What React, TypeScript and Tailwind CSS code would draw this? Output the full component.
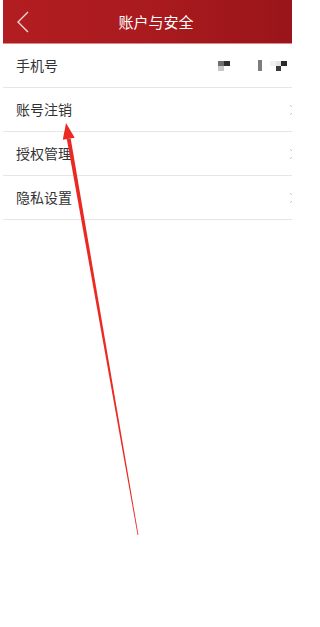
import React from "react";

const rows = ["账号注销", "授权管理", "隐私设置"];

function Chevron() {
  return (
    <svg width="8" height="12" viewBox="0 0 8 12" className="shrink-0">
      <path d="M1 1 L6 6 L1 11" fill="none" stroke="#c4c4c4" strokeWidth="1" />
    </svg>
  );
}

export default function App() {
  return (
    <div
      className="relative w-[292px] h-[627px] bg-white overflow-hidden pl-[3px]"
      style={{ fontFamily: '"Noto Sans CJK SC", "Noto Sans", sans-serif' }}
    >
      <div className="h-[44px] bg-gradient-to-r from-[#b21d21] via-[#a91a1e] to-[#981519] border-b border-[#d98a8c] flex items-center relative w-[300px]">
        <svg width="14" height="22" viewBox="0 0 14 22" className="ml-[13px]">
          <path d="M12 1 L2 11 L12 21" fill="none" stroke="#f4d6d6" strokeWidth="1.4" />
        </svg>
        <div className="absolute left-0 right-[8px] text-center text-white text-[15px] leading-[20px] pl-[14px]">
          账户与安全
        </div>
      </div>
      <div className="h-[44px] flex items-center border-b border-[#e6e6e6] pl-[13px] text-[14px] text-[#333]">
        <span className="flex-1">手机号</span>
        <div className="flex items-center mr-[5px]">
          <div className="flex flex-col mr-[28px]">
            <div className="flex">
              <div className="w-[6px] h-[5px] bg-[#6e6e6e]" />
              <div className="w-[6px] h-[5px] bg-[#2e2e2e]" />
            </div>
            <div className="w-[6px] h-[5px] bg-[#c9c9c9]" />
          </div>
          <div className="w-[4px] h-[11px] bg-[#7d7d7d] mr-[8px]" />
          <div className="flex flex-col">
            <div className="flex">
              <div className="w-[6px] h-[5px] bg-[#f0f0f0]" />
              <div className="w-[5px] h-[5px] bg-[#e3e3e3]" />
              <div className="w-[6px] h-[5px] bg-[#2b2b2b]" />
            </div>
            <div className="flex">
              <div className="w-[6px] h-[5px] bg-white" />
              <div className="w-[5px] h-[5px] bg-[#3a3a3a]" />
              <div className="w-[6px] h-[5px] bg-white" />
            </div>
          </div>
        </div>
      </div>
      {rows.map((r) => (
        <div
          key={r}
          className="h-[44px] flex items-center border-b border-[#e6e6e6] pl-[13px] text-[14px] text-[#333] w-[294px]"
        >
          <span className="flex-1">{r}</span>
          <Chevron />
        </div>
      ))}
      <svg
        className="absolute left-0 top-0 pointer-events-none"
        width="292"
        height="627"
        viewBox="0 0 292 627"
      >
        <polygon
          points="70.7,138.5 138.4,535 137.6,535 66.8,139.1"
          fill="#ea2a22"
        />
        <polygon points="66,123 74.7,137.8 62.8,139.8" fill="#ea2a22" />
      </svg>
    </div>
  );
}
